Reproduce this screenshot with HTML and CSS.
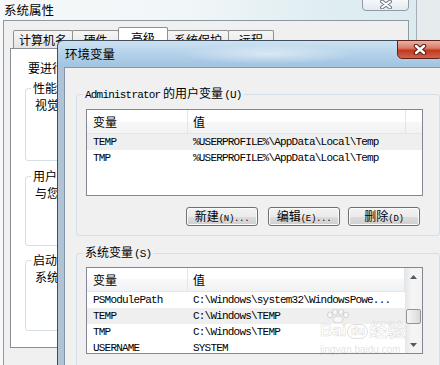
FILE: index.html
```html
<!DOCTYPE html>
<html lang="zh-CN">
<head>
  <meta charset="UTF-8">
  <title>环境变量</title>
  <link rel="stylesheet" href="styles.css">
</head>
<body>
<div class="win sys">
  <div class="sys-title">系统属性</div>
  <div class="sys-close">
    <svg width="14" height="9" viewBox="0 0 14 9"><path d="M3 1.5L11 7.5M11 1.5L3 7.5" stroke="#6d7b88" stroke-width="4" stroke-linecap="round"/><path d="M3 1.5L11 7.5M11 1.5L3 7.5" stroke="#fff" stroke-width="2" stroke-linecap="round"/></svg>
  </div>
  <div class="sys-client">
    <div class="tabs">
      <span class="tab t1">计算机名</span>
      <span class="tab t2">硬件</span>
      <span class="tab t3 on">高级</span>
      <span class="tab t4">系统保护</span>
      <span class="tab t5">远程</span>
    </div>
    <!-- only the part left of the env window is visible -->
    <div class="page">
      <p class="hint">要进行</p>
      <fieldset class="grp g1">
        <legend>性能</legend>
        <p>视觉</p>
      </fieldset>
      <fieldset class="grp g2">
        <legend>用户</legend>
        <p>与您</p>
      </fieldset>
      <fieldset class="grp g3">
        <legend>启动</legend>
        <p>系统</p>
      </fieldset>
    </div>
  </div>
</div>

<div class="win env">
  <div class="env-title">环境变量</div>
  <div class="env-close">
    <svg width="16" height="11" viewBox="0 0 16 11"><path d="M4 2L12 9M12 2L4 9" stroke="#5a1c12" stroke-width="4.5" stroke-linecap="round"/><path d="M4 2L12 9M12 2L4 9" stroke="#fff" stroke-width="2.5" stroke-linecap="round"/></svg>
  </div>
  <div class="env-client">
    <fieldset class="vars">
      <legend><span class="lat">Administrator</span> 的用户变量<span class="key">(U)</span></legend>
      <div class="list">
        <div class="lv">
          <div class="lv-head"><span class="c1">变量</span><span class="c2">值</span></div>
          <div class="row sel"><span class="c1 lat">TEMP</span><span class="c2 lat">%USERPROFILE%\AppData\Local\Temp</span></div>
          <div class="row"><span class="c1 lat">TMP</span><span class="c2 lat">%USERPROFILE%\AppData\Local\Temp</span></div>
        </div>
      </div>
      <div class="btns">
        <button type="button">新建<span class="acc">(N)...</span></button>
        <button type="button">编辑<span class="acc">(E)...</span></button>
        <button type="button">删除<span class="acc">(D)</span></button>
      </div>
    </fieldset>

    <fieldset class="vars sysvars">
      <legend>系统变量<span class="key">(S)</span></legend>
      <div class="list">
        <div class="lv">
          <div class="lv-head"><span class="c1">变量</span><span class="c2">值</span></div>
          <div class="row"><span class="c1 lat">PSModulePath</span><span class="c2 lat">C:\Windows\system32\WindowsPowe...</span></div>
          <div class="row sel"><span class="c1 lat">TEMP</span><span class="c2 lat">C:\Windows\TEMP</span></div>
          <div class="row"><span class="c1 lat">TMP</span><span class="c2 lat">C:\Windows\TEMP</span></div>
          <div class="row"><span class="c1 lat">USERNAME</span><span class="c2 lat">SYSTEM</span></div>
        </div>
        <div class="sbar">
          <span class="arr"><svg width="7" height="4" viewBox="0 0 7 4"><path d="M0 4L3.5 0L7 4Z" fill="#4e5a66"/></svg></span>
          <span class="track"><span class="thumb"></span></span>
          <span class="arr"><svg width="7" height="4" viewBox="0 0 7 4"><path d="M0 0L3.5 4L7 0Z" fill="#4e5a66"/></svg></span>
        </div>
      </div>
      <div class="btns">
        <button type="button">新建<span class="acc">(W)...</span></button>
        <button type="button" class="def">编辑<span class="acc">(I)...</span></button>
        <button type="button">删除<span class="acc">(L)</span></button>
      </div>
    </fieldset>
  </div>
</div>

<div class="mark">
  <svg class="paw" width="28" height="14" viewBox="0 0 28 14">
    <g fill="rgba(255,255,255,0.5)" stroke="rgba(150,150,150,0.35)" stroke-width="1">
      <ellipse cx="6" cy="6" rx="2.5" ry="3"/>
      <ellipse cx="11" cy="3" rx="2.5" ry="3"/>
      <ellipse cx="17" cy="3" rx="2.5" ry="3"/>
      <ellipse cx="22" cy="6" rx="2.5" ry="3"/>
      <ellipse cx="14" cy="10.5" rx="5" ry="3.5"/>
    </g>
  </svg>
  <span class="mark-big">Bai<span class="du">du</span><span class="jy">经验</span></span>
  <span class="mark-url">jingyan.baidu.com</span>
</div>
</body>
</html>
```

FILE: styles.css
```css
* {
  box-sizing: border-box;
}
html, body {
  margin: 0;
}
body {
  position: relative;
  width: 440px;
  height: 365px;
  overflow: hidden;
  font: 12px/16px "Noto Sans CJK SC", sans-serif;
  color: #000;
  background: #e6ebee;
}
p {
  margin: 0;
  white-space: nowrap;
}
.lat {
  font-family: "Liberation Mono", monospace;
  font-size: 11px;
  letter-spacing: -0.8px;
}
.key {
  margin-left: 1px;
  font-family: "Liberation Mono", monospace;
  font-size: 11px;
  letter-spacing: -0.8px;
}
.acc {
  font-family: "Liberation Mono", monospace;
  font-size: 9px;
  letter-spacing: -0.3px;
}

/* windows on the desktop */
.win {
  position: absolute;
}

/* 系统属性 */
.sys {
  left: 0;
  top: 0;
  width: 417px;
  height: 380px;
  border-right: 1px solid #a4afb7;
  background: linear-gradient(90deg, #f6f8f9 0%, #f1f6f8 45%, #e0eef2 75%, #dcebef 100%);
}
.sys-title {
  height: 20px;
  padding: 2px 0 0 4px;
  font-size: 12.5px;
}
.sys-close {
  position: absolute;
  left: 362px;
  top: -4px;
  width: 47px;
  height: 15px;
  border: 1px solid #8e9ba6;
  border-radius: 0 0 4px 4px;
  background: linear-gradient(#fbfcfd, #e4eaee);
  display: flex;
  justify-content: center;
  padding-top: 3px;
}
.sys-client {
  margin-left: 3px;
  width: 406px;
  height: 360px;
  border: 1px solid #8d9aa6;
  background: #f0f0f0;
  padding: 6px 0 0 6px;
}
.tabs {
  display: flex;
  align-items: flex-end;
  height: 21px;
  padding-left: 3px;
}
.tab {
  height: 18px;
  margin-left: -1px;
  padding-top: 1px;
  border: 1px solid #8e9091;
  border-bottom: none;
  border-radius: 2px 2px 0 0;
  background: linear-gradient(#f6f6f6, #e4e4e4);
  text-align: center;
  line-height: 15px;
  white-space: nowrap;
  overflow: hidden;
}
.t1 { width: 60px; margin-left: 0; }
.t2 { width: 47px; }
.t3 { width: 50px; }
.t4 { width: 62px; }
.t5 { width: 46px; }
.tab.on {
  position: relative;
  z-index: 1;
  height: 22px;
  margin-bottom: -1px;
  padding-top: 2px;
  background: #fff;
}
.page {
  width: 391px;
  height: 300px;
  border: 1px solid #898c95;
  background: #fff;
  padding: 11px 0 0 14px;
}
.hint {
  margin-left: 3px;
}
.grp {
  width: 370px;
  margin: 0;
  padding: 0 7px;
  border: 1px solid #d5dfe5;
  border-radius: 3px;
}
.grp legend {
  padding: 0 2px;
  margin-left: -2px;
  line-height: 16px;
}
.grp p {
  margin: 1px 0 0 2px;
}
.g1 { height: 81px; margin-top: 4px; }
.g2 { height: 78px; margin-top: 7px; }
.g3 { height: 79px; margin-top: 6px; }

/* 环境变量 */
.env {
  z-index: 2;
  left: 57px;
  top: 40px;
  width: 400px;
  height: 340px;
  border: 1px solid #3f4d5c;
  border-radius: 6px 6px 0 0;
  background: linear-gradient(#cde2f2 0px, #b4d2ea 12px, #a3c5e2 24px, #afc3d6 27px, #b1c4d5 100%);
}
.env-title {
  height: 26px;
  padding: 7px 0 0 7px;
  font-size: 12.5px;
  line-height: 12px;
  background: radial-gradient(ellipse 90px 10px at 210px 13px, rgba(255, 255, 255, 0.5), rgba(255, 255, 255, 0));
}
.env-close {
  position: absolute;
  left: 339px;
  top: -1px;
  width: 46px;
  height: 19px;
  border: 1px solid #5e2318;
  border-radius: 0 0 5px 5px;
  background: linear-gradient(#eab0a3 0%, #d97a66 42%, #c2391f 55%, #d3634a 100%);
  display: flex;
  justify-content: center;
  align-items: center;
}
.env-client {
  margin-left: 6px;
  height: 320px;
  border: 1px solid #8395a8;
  border-right: none;
  background: #f0f0f0;
  padding: 17px 0 0 11px;
}
.vars {
  width: 357px;
  margin: 0;
  padding: 0 9px 9px;
  border: 1px solid #d5dfe5;
  border-radius: 3px;
}
.vars legend {
  padding: 0 2px;
  margin-left: -3px;
  line-height: 16px;
  white-space: nowrap;
}
.sysvars {
  margin-top: 8px;
}
.list {
  display: flex;
  width: 337px;
  height: 87px;
  margin-top: 6px;
  border: 1px solid #828790;
  background: #fff;
  overflow: hidden;
}
.sysvars .list {
  margin-top: 5px;
}
.lv {
  flex: 1;
  min-width: 0;
}
.lv-head {
  display: flex;
  height: 24px;
  border-bottom: 1px solid #e5e5e5;
  background: linear-gradient(#fff 0%, #fff 50%, #f7f8fa 50%, #f1f2f4 100%);
  line-height: 23px;
}
.lv-head .c1 {
  border-right: 1px solid #e5e5e5;
}
.lv-head .c2 {
  width: 218px;
  border-right: 1px solid #e5e5e5;
}
.c1 {
  width: 101px;
  padding-left: 6px;
  flex-shrink: 0;
}
.c2 {
  padding-left: 5px;
  white-space: nowrap;
}
.row {
  display: flex;
  height: 16px;
  line-height: 16px;
  white-space: nowrap;
}
.row.sel {
  background: #efefef;
}
.sbar {
  display: flex;
  flex-direction: column;
  width: 17px;
  background: linear-gradient(90deg, #e6e6e6, #f5f5f5 40%, #f2f2f2);
}
.arr {
  height: 17px;
  display: flex;
  justify-content: center;
  align-items: center;
}
.track {
  flex: 1;
  padding: 24px 1px 0;
}
.thumb {
  display: block;
  height: 15px;
  border: 1px solid #959595;
  border-radius: 2px;
  background: linear-gradient(90deg, #f4f4f4, #e8e8e8 50%, #d8d8d8);
}
.btns {
  display: flex;
  padding-left: 100px;
  margin-top: 11px;
}
button {
  width: 72px;
  height: 19px;
  margin-right: 10px;
  padding: 0;
  border: 1px solid #707070;
  border-radius: 3px;
  background: linear-gradient(#f2f2f2 0%, #ebebeb 50%, #dddddd 50%, #cfcfcf 100%);
  box-shadow: inset 0 0 0 1px #fbfbfb;
  font: 12px/16px "Noto Sans CJK SC", sans-serif;
  color: #000;
  white-space: nowrap;
}
button:nth-child(2) {
  margin-right: 8px;
}
button.def {
  border-color: #3c7fb1;
  background: linear-gradient(#eaf6fd 0%, #d9f0fc 50%, #bee6fd 50%, #a7d9f5 100%);
  box-shadow: inset 0 0 0 1px #c4ecff;
}

/* watermark over the picture */
.mark {
  position: absolute;
  z-index: 3;
  left: 320px;
  top: 309px;
  width: 100px;
  pointer-events: none;
}
.paw {
  display: block;
  margin-left: 4px;
}
.mark-big {
  display: flex;
  align-items: center;
  height: 16px;
  font: bold 17px/16px "Liberation Sans", "Noto Sans CJK SC", sans-serif;
  color: rgba(255, 255, 255, 0.5);
  -webkit-text-stroke: 0.6px rgba(150, 150, 150, 0.35);
}
.du {
  margin: 0 1px;
  padding: 0 2px;
  border-radius: 8px;
  border: 1px solid rgba(150, 150, 150, 0.3);
  font-size: 12px;
  line-height: 13px;
}
.jy {
  font-size: 18px;
}
.mark-url {
  display: block;
  margin-top: 5px;
  font: 10px/12px "Liberation Sans", sans-serif;
  color: rgba(180, 180, 180, 0.4);
}
```
